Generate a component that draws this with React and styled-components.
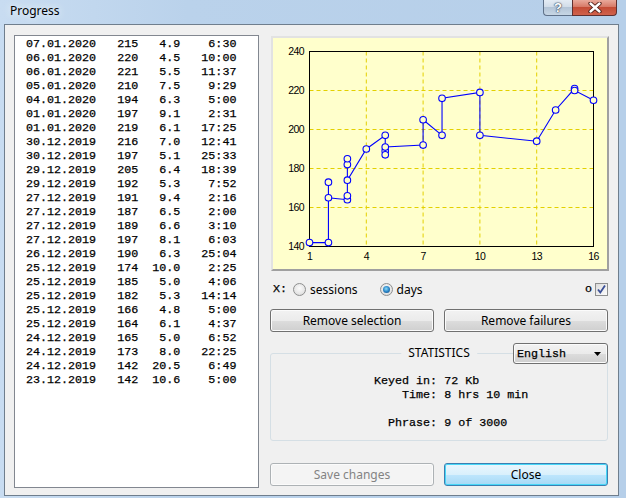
import React from "react";
import styled, { createGlobalStyle } from "styled-components";

const GlobalStyle = createGlobalStyle`
  html, body {
    margin: 0;
    padding: 0;
  }
  body {
    background: #b9d1ea;
    font-family: "Noto Sans", "Open Sans", sans-serif;
  }
`;

const rows = [
  ["07.01.2020", 215, "4.9", "6:30"],
  ["06.01.2020", 220, "4.5", "10:00"],
  ["06.01.2020", 221, "5.5", "11:37"],
  ["05.01.2020", 210, "7.5", "9:29"],
  ["04.01.2020", 194, "6.3", "5:00"],
  ["01.01.2020", 197, "9.1", "2:31"],
  ["01.01.2020", 219, "6.1", "17:25"],
  ["30.12.2019", 216, "7.0", "12:41"],
  ["30.12.2019", 197, "5.1", "25:33"],
  ["29.12.2019", 205, "6.4", "18:39"],
  ["29.12.2019", 192, "5.3", "7:52"],
  ["27.12.2019", 191, "9.4", "2:16"],
  ["27.12.2019", 187, "6.5", "2:00"],
  ["27.12.2019", 189, "6.6", "3:10"],
  ["27.12.2019", 197, "8.1", "6:03"],
  ["26.12.2019", 190, "6.3", "25:04"],
  ["25.12.2019", 174, "10.0", "2:25"],
  ["25.12.2019", 185, "5.0", "4:06"],
  ["25.12.2019", 182, "5.3", "14:14"],
  ["25.12.2019", 166, "4.8", "5:00"],
  ["25.12.2019", 164, "6.1", "4:37"],
  ["24.12.2019", 165, "5.0", "6:52"],
  ["24.12.2019", 173, "8.0", "22:25"],
  ["24.12.2019", 142, "20.5", "6:49"],
  ["23.12.2019", 142, "10.6", "5:00"],
];

// chronological points: [day index, value]
const points = [
  [1, 142], [2, 142], [2, 173], [2, 165], [3, 164], [3, 166], [3, 182],
  [3, 185], [3, 174], [4, 190], [5, 197], [5, 189], [5, 187], [5, 191],
  [7, 192], [7, 205], [8, 197], [8, 216], [10, 219], [10, 197], [13, 194],
  [14, 210], [15, 221], [15, 220], [16, 215],
];

const mono = `"Liberation Mono", "Courier New", monospace`;

const Window = styled.div`
  width: 626px;
  height: 498px;
  display: flex;
  flex-direction: column;
  background: linear-gradient(to right, #c8dcf1 0%, #bad2eb 30%, #b6cfe9 100%);
  overflow: hidden;
`;

const TitleBar = styled.div`
  height: 24px;
  display: flex;
  align-items: flex-start;
  flex-shrink: 0;
`;

const Caption = styled.div`
  margin: 3px 0 0 10px;
  font-size: 12px;
  line-height: 16px;
  color: #000;
  text-shadow: 0 0 6px #e6f0fa, 0 0 10px #e6f0fa;
`;

const CaptionButtons = styled.div`
  margin-left: auto;
  margin-right: 9px;
  display: flex;
`;

const HelpButton = styled.div`
  width: 29px;
  height: 16px;
  box-sizing: border-box;
  border: 1px solid #5f7189;
  border-top: none;
  border-right: none;
  border-radius: 0 0 0 4px;
  background: linear-gradient(#e4ecf4 0%, #d2dde9 45%, #b4c5d7 50%, #c7d6e5 100%);
  display: flex;
  align-items: center;
  justify-content: center;
  font: bold 13px "Liberation Sans", sans-serif;
  color: #fff;
  text-shadow: 0 0 1px #3d4e63, 0 0 1px #3d4e63, 0 0 2px #3d4e63;
`;

const CloseButton = styled.div`
  width: 45px;
  height: 16px;
  box-sizing: border-box;
  border: 1px solid #5f3030;
  border-top: none;
  border-radius: 0 0 4px 0;
  background: linear-gradient(#e9a99b 0%, #d77a68 45%, #c44c36 50%, #d0624c 100%);
  display: flex;
  align-items: center;
  justify-content: center;
`;

const Client = styled.div`
  flex: 1;
  margin: 0 7px 2px 4px;
  border: 1px solid #6f7e8d;
  background: #f0f0f0;
  display: flex;
  align-items: flex-start;
  padding: 10px 10px 0 9px;
  gap: 11px;
`;

const ListBox = styled.div`
  width: 245px;
  height: 453px;
  box-sizing: border-box;
  border: 1px solid #828790;
  background: #fff;
  padding: 1px 0 0 11px;
  flex-shrink: 0;
`;

const ListRow = styled.div`
  font-family: ${mono};
  font-size: 11.7px;
  line-height: 14px;
  white-space: pre;
  color: #000;
  -webkit-text-stroke: 0.25px #000;
`;

const RightColumn = styled.div`
  width: 338px;
  display: flex;
  flex-direction: column;
  padding-top: 1px;
`;

const ChartPanel = styled.div`
  width: 338px;
  height: 235px;
  margin-left: 1px;
  box-sizing: border-box;
  border: 2px solid;
  border-color: #e2e2e2 #a0a0a0 #a0a0a0 #e2e2e2;
  background: #ffffcc;
`;

const AxisRow = styled.div`
  margin-top: 9px;
  height: 18px;
  display: flex;
  align-items: center;
  padding-left: 3px;
`;

const MonoLabel = styled.span`
  font-family: ${mono};
  font-size: 11.7px;
  color: #000;
  -webkit-text-stroke: 0.25px #000;
  margin-right: ${(p) => p.$gap || 0}px;
`;

const RadioLabel = styled.label`
  display: flex;
  align-items: center;
  gap: 4px;
  font-size: 12px;
  color: #000;
  margin-right: ${(p) => p.$gap || 0}px;
`;

const RadioCircle = styled.span`
  width: 13px;
  height: 13px;
  box-sizing: border-box;
  border-radius: 50%;
  border: 1px solid #8e8f8f;
  background: radial-gradient(circle at 50% 40%, #fbfbfb 0%, #e6e6e6 60%, #cfcfcf 100%);
  display: flex;
  align-items: center;
  justify-content: center;
  &::after {
    content: "";
    display: ${(p) => (p.$checked ? "block" : "none")};
    width: 7px;
    height: 7px;
    border-radius: 50%;
    background: radial-gradient(circle at 45% 40%, #8fdcf8 0%, #2a86c8 50%, #123f72 100%);
  }
`;

const CheckWrap = styled.div`
  margin-left: auto;
  display: flex;
  align-items: center;
  gap: 3px;
`;

const CheckBox = styled.span`
  width: 13px;
  height: 13px;
  box-sizing: border-box;
  border: 1px solid #8e8f8f;
  background: linear-gradient(135deg, #dcdcdc, #fdfdfd);
  display: flex;
  align-items: center;
  justify-content: center;
`;

const ButtonRow = styled.div`
  margin-top: ${(p) => p.$top}px;
  display: flex;
  justify-content: space-between;
`;

const Button = styled.button`
  width: 164px;
  height: 23px;
  box-sizing: border-box;
  padding: 0;
  border-radius: 3px;
  font-family: "Noto Sans", "Open Sans", sans-serif;
  font-size: 12px;
  color: ${(p) => (p.$disabled ? "#838383" : "#000")};
  border: 1px solid ${(p) => (p.$disabled ? "#adb2b5" : p.$default ? "#3c7fb1" : "#707070")};
  background: ${(p) =>
    p.$disabled
      ? "#f4f4f4"
      : p.$default
      ? "linear-gradient(#eaf6fd 0%, #d9f0fc 50%, #bee6fd 51%, #a7d9f5 100%)"
      : "linear-gradient(#f2f2f2 0%, #ebebeb 50%, #dddddd 51%, #cfcfcf 100%)"};
  box-shadow: ${(p) => (p.$default ? "inset 0 0 0 1px #48d7f7" : "inset 0 0 0 1px #fbfbfb")};
`;

const StatsArea = styled.div`
  position: relative;
  margin-top: 11px;
  padding-top: 10px;
`;

const GroupBox = styled.div`
  height: 88px;
  box-sizing: border-box;
  border: 1px solid #d5dfe5;
  border-radius: 3px;
  position: relative;
  padding: 20px 0 0 103px;
`;

const Legend = styled.div`
  position: absolute;
  top: -9px;
  left: 50%;
  transform: translateX(-50%);
  padding: 0 7px;
  background: #f0f0f0;
  font-size: 12px;
  line-height: 16px;
  color: #000;
`;

const StatsText = styled.div`
  font-family: ${mono};
  font-size: 11.7px;
  line-height: 14px;
  white-space: pre;
  color: #000;
  -webkit-text-stroke: 0.25px #000;
`;

const Combo = styled.div`
  position: absolute;
  top: 0;
  right: 0;
  width: 95px;
  height: 21px;
  box-sizing: border-box;
  border: 1px solid #707070;
  border-radius: 3px;
  background: linear-gradient(#f2f2f2 0%, #ebebeb 50%, #dddddd 51%, #cfcfcf 100%);
  box-shadow: inset 0 0 0 1px #fbfbfb;
  display: flex;
  align-items: center;
  padding: 0 6px 0 3px;
`;

const ComboText = styled.span`
  font-family: ${mono};
  font-size: 11.7px;
  color: #000;
  -webkit-text-stroke: 0.25px #000;
  flex: 1;
`;

const PLOT = { l: 36.5, t: 13.5, r: 320.5, b: 208.5 };
const sx = (d) => PLOT.l + ((d - 1) * (PLOT.r - PLOT.l)) / 15;
const sy = (v) => PLOT.t + ((240 - v) * (PLOT.b - PLOT.t)) / 100;

function Chart() {
  const grid = "#e3d000";
  const path = points.map(([d, v], i) => `${i ? "L" : "M"}${sx(d)} ${sy(v)}`).join(" ");
  return (
    <svg width="334" height="231" style={{ display: "block" }}>
      {[4, 7, 10, 13].map((d) => (
        <line key={d} x1={sx(d)} x2={sx(d)} y1={PLOT.t} y2={PLOT.b} stroke={grid} strokeDasharray="4 3" />
      ))}
      {[160, 180, 200, 220].map((v) => (
        <line key={v} x1={PLOT.l} x2={PLOT.r} y1={sy(v)} y2={sy(v)} stroke={grid} strokeDasharray="4 3" />
      ))}
      <rect x={PLOT.l} y={PLOT.t} width={PLOT.r - PLOT.l} height={PLOT.b - PLOT.t} fill="none" stroke="#000" />
      <path d={path} fill="none" stroke="#0000ff" strokeWidth="1.1" />
      {points.map(([d, v], i) => (
        <circle key={i} cx={sx(d)} cy={sy(v)} r="3.3" fill="#ffffcc" stroke="#0000ff" strokeWidth="1.1" />
      ))}
      <g fontFamily='"Liberation Sans", Arial, sans-serif' fontSize="10.5" fill="#000" letterSpacing="-0.6">
        {[140, 160, 180, 200, 220, 240].map((v) => (
          <text key={v} x="31" y={sy(v) + 3.8} textAnchor="end">
            {v}
          </text>
        ))}
        {[1, 4, 7, 10, 13, 16].map((d) => (
          <text key={d} x={sx(d)} y="221.5" textAnchor="middle">
            {d}
          </text>
        ))}
      </g>
    </svg>
  );
}

export default function App() {
  return (
    <>
      <GlobalStyle />
      <Window>
        <TitleBar>
          <Caption>Progress</Caption>
          <CaptionButtons>
            <HelpButton>?</HelpButton>
            <CloseButton>
              <svg width="14" height="11" viewBox="0 0 14 11">
                <path d="M2.5 1.5 L11.5 9.5 M11.5 1.5 L2.5 9.5" stroke="#4a1a14" strokeWidth="4.2" strokeLinecap="round" />
                <path d="M2.5 1.5 L11.5 9.5 M11.5 1.5 L2.5 9.5" stroke="#fff" strokeWidth="2.4" strokeLinecap="round" />
              </svg>
            </CloseButton>
          </CaptionButtons>
        </TitleBar>
        <Client>
          <ListBox>
            {rows.map(([d, n, s, t], i) => (
              <ListRow key={i}>{`${d}   ${n}  ${s.padStart(4)}   ${t.padStart(5)}`}</ListRow>
            ))}
          </ListBox>
          <RightColumn>
            <ChartPanel>
              <Chart />
            </ChartPanel>
            <AxisRow>
              <MonoLabel $gap={6}>X:</MonoLabel>
              <RadioLabel $gap={22}>
                <RadioCircle />
                sessions
              </RadioLabel>
              <RadioLabel>
                <RadioCircle $checked />
                days
              </RadioLabel>
              <CheckWrap>
                <MonoLabel>o</MonoLabel>
                <CheckBox>
                  <svg width="11" height="11" viewBox="0 0 11 11">
                    <path d="M2 5.5 L4.3 8.5 L9 1.5" fill="none" stroke="#3a4f96" strokeWidth="1.8" />
                  </svg>
                </CheckBox>
              </CheckWrap>
            </AxisRow>
            <ButtonRow $top={11}>
              <Button>Remove selection</Button>
              <Button>Remove failures</Button>
            </ButtonRow>
            <StatsArea>
              <GroupBox>
                <Legend>STATISTICS</Legend>
                <StatsText>{"Keyed in: 72 Kb\n    Time: 8 hrs 10 min\n\n  Phrase: 9 of 3000"}</StatsText>
              </GroupBox>
              <Combo>
                <ComboText>English</ComboText>
                <svg width="7" height="4" viewBox="0 0 7 4">
                  <path d="M0 0 L7 0 L3.5 4 Z" fill="#000" />
                </svg>
              </Combo>
            </StatsArea>
            <ButtonRow $top={22}>
              <Button $disabled>Save changes</Button>
              <Button $default>Close</Button>
            </ButtonRow>
          </RightColumn>
        </Client>
      </Window>
    </>
  );
}
